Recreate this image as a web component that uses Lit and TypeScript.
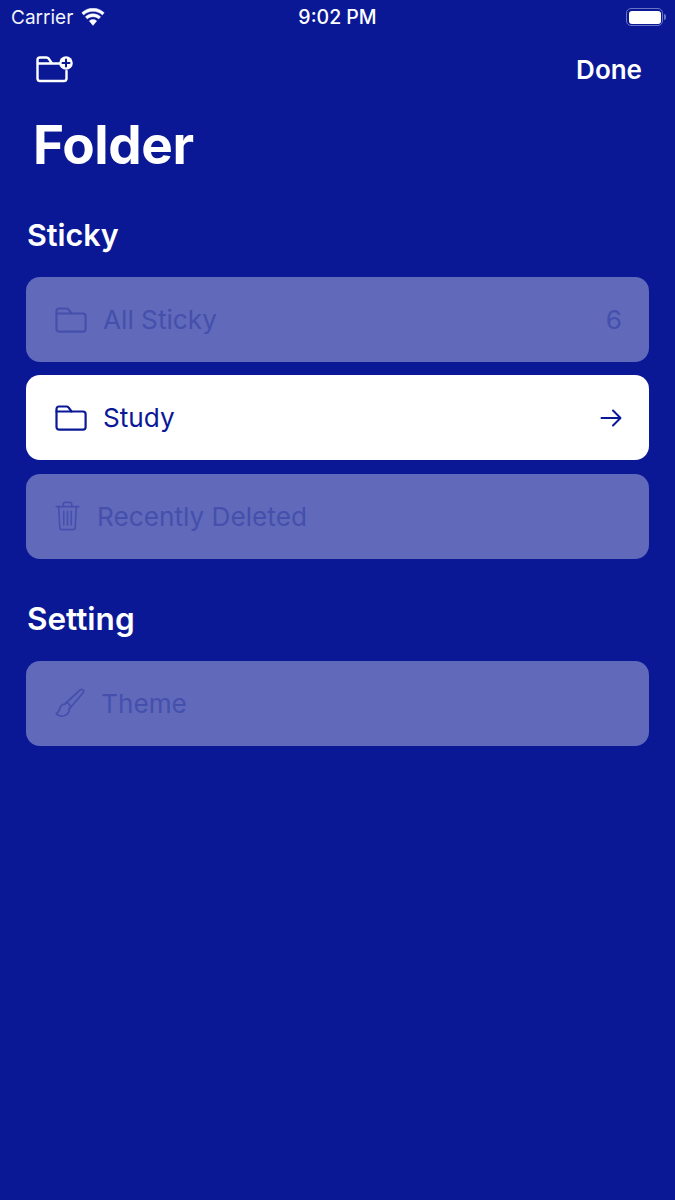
import { LitElement, html, css } from "lit";
import { customElement } from "lit/decorators.js";

const folder = html`<svg class="ico" viewBox="0 0 32 26" width="32" height="26" fill="none" stroke="currentColor" stroke-width="2.200" stroke-linejoin="round" stroke-linecap="round"><path d="M1.500 22V4C1.500 2.500 2.500 1.500 4 1.500h7.500c1 0 1.600.4 2.200 1.100L16.500 6.500H28c1.600 0 2.600 1 2.600 2.600V22c0 1.600-1 2.600-2.600 2.600H4.200C2.600 24.600 1.500 23.600 1.500 22Z"/><path d="M1.500 6.500H16.500"/></svg>`;

const trash = html`<svg class="ico" viewBox="0 0 26 32" width="25" height="30" fill="none" stroke="currentColor" stroke-width="1.700" stroke-linecap="round" stroke-linejoin="round"><path d="M1 6h24"/><path d="M8.500 6V3.500C8.500 2.300 9.300 1.500 10.500 1.500h5c1.200 0 2 .8 2 2V6"/><path d="M3.500 6l1.300 22.500c.1 1.300.9 2 2.200 2h12c1.300 0 2.100-.7 2.200-2L22.500 6"/><path d="M9 11v14.500M13 11v14.500M17 11v14.500"/></svg>`;

const brush = html`<svg class="ico" viewBox="0 0 30 30" width="30" height="30" fill="none" stroke="currentColor" stroke-width="1.800" stroke-linecap="round" stroke-linejoin="round"><path d="M11.500 14.500 25 2c1-.9 2.300-.8 3 0 .7.700.8 2-.1 3L16 19"/><path d="M9.800 16.200l2-2 4.500 4.500-2 2"/><path d="M9.800 16.200c-3 .3-4.500 2-5 4.300-.4 2-1.500 3.800-3.500 5.300 1.500 2.200 5.700 2.900 8.500 1.700 3.300-1.400 4.800-4 4.500-7"/></svg>`;

const arrow = html`<svg viewBox="0 0 22 18" width="22" height="18" fill="none" stroke="currentColor" stroke-width="2" stroke-linecap="round" stroke-linejoin="round"><path d="M1.500 9h19M13 1.500 20.500 9 13 16.500"/></svg>`;

@customElement("app-root")
export class AppRoot extends LitElement {
  static styles = css`
    :host {
      display: block;
      width: 675px;
      height: 1200px;
      background: #0a1896;
      color: #fff;
      font-family: Inter, "Liberation Sans", sans-serif;
      overflow: hidden;
    }
    .status {
      display: grid;
      grid-template-columns: 1fr auto 1fr;
      align-items: center;
      height: 34px;
      padding: 0 9px 0 11px;
    }
    .status-left {
      display: flex;
      align-items: center;
      gap: 7px;
      font-size: 19px;
      color: #f2f3fa;
    }
    .time {
      font-weight: 500;
      font-size: 19.500px;
      margin-right: 2px;
    }
    .status-right {
      display: flex;
      justify-content: flex-end;
      align-items: center;
      gap: 1px;
    }
    .battery {
      box-sizing: border-box;
      width: 37px;
      height: 18px;
      border: 1.500px solid #6a73c4;
      border-radius: 5px;
      padding: 1.500px;
    }
    .battery i {
      display: block;
      height: 100%;
      background: #fff;
      border-radius: 3px;
    }
    .nub {
      width: 2px;
      height: 6px;
      background: #6a73c4;
      border-radius: 0 2px 2px 0;
    }
    .nav {
      display: flex;
      justify-content: space-between;
      align-items: center;
      padding: 17.500px 33px 0 36px;
      height: 36px;
    }
    .done {
      font-size: 26px;
      font-weight: 600;
      line-height: 36px;
    }
    h1 {
      margin: 0;
      padding: 26.500px 0 0 33px;
      font-size: 53px;
      font-weight: 700;
      line-height: 62px;
      letter-spacing: -0.400px;
    }
    h2 {
      margin: 0;
      padding-left: 27px;
      font-weight: 600;
      line-height: 40px;
    }
    .sticky-h {
      padding-top: 39px;
      font-size: 30.500px;
    }
    .setting-h {
      padding-top: 40px;
      font-size: 31.500px;
    }
    .list {
      display: flex;
      flex-direction: column;
      gap: 13.450px;
      margin: 22px 26px 0;
    }
    .row {
      box-sizing: border-box;
      display: flex;
      align-items: center;
      height: 85px;
      padding: 0 27px 0 29px;
      border-radius: 14px;
      background: #6169bb;
      color: #4450ab;
      font-size: 26.200px;
    }
    .row.active {
      background: #fff;
      color: #0a1896;
    }
    .ico {
      flex: none;
    }
    .label {
      flex: 1;
      margin-left: 16px;
    }
    .label.after-trash {
      margin-left: 17px;
    }
  `;

  render() {
    return html`
      <div class="status">
        <div class="status-left">
          <span>Carrier</span>
          <svg viewBox="0 0 26 20" width="26" height="19" fill="#fff" stroke="#fff" stroke-width="0.500"><path d="M13 3.500c3.800 0 7.200 1.400 9.800 3.800l2-2.300C21.600 2 17.500.2 13 .2S4.400 2 1.200 5l2 2.300C5.800 4.900 9.200 3.500 13 3.500Z"/><path d="M13 9.200c2.300 0 4.400.9 6 2.300l2-2.300C18.800 7.300 16 6.100 13 6.100S7.200 7.300 5 9.200l2 2.300c1.600-1.400 3.700-2.300 6-2.300Z"/><path d="M13 12.200c-1.500 0-2.800.5-3.900 1.400l3.900 4.700 3.900-4.700c-1.100-.9-2.400-1.400-3.900-1.400Z"/></svg>
        </div>
        <div class="time">9:02 PM</div>
        <div class="status-right"><div class="battery"><i></i></div><div class="nub"></div></div>
      </div>
      <div class="nav">
        <svg viewBox="0 0 38 27" width="38" height="27" fill="none" stroke="#fff" stroke-width="2.400" stroke-linecap="round" stroke-linejoin="round"><path d="M1.500 7.500V4C1.500 2.600 2.500 1.500 4 1.500h6.500c1 0 1.600.4 2.200 1.100l3.300 4.900h8M1.500 7.500H16M1.500 7.500V22.500c0 1.500 1 2.500 2.500 2.500h24c1.500 0 2.500-1 2.500-2.500v-7.500"/><circle cx="30" cy="7" r="6.800" fill="#fff" stroke="none"/><path d="M30 3.500v7M26.500 7h7" stroke="#0a1896" stroke-width="2"/></svg>
        <div class="done">Done</div>
      </div>
      <h1>Folder</h1>
      <h2 class="sticky-h">Sticky</h2>
      <div class="list">
        <div class="row">${folder}<span class="label">All Sticky</span><span>6</span></div>
        <div class="row active">${folder}<span class="label">Study</span>${arrow}</div>
        <div class="row">${trash}<span class="label after-trash">Recently Deleted</span></div>
      </div>
      <h2 class="setting-h">Setting</h2>
      <div class="list">
        <div class="row">${brush}<span class="label">Theme</span></div>
      </div>
    `;
  }
}
